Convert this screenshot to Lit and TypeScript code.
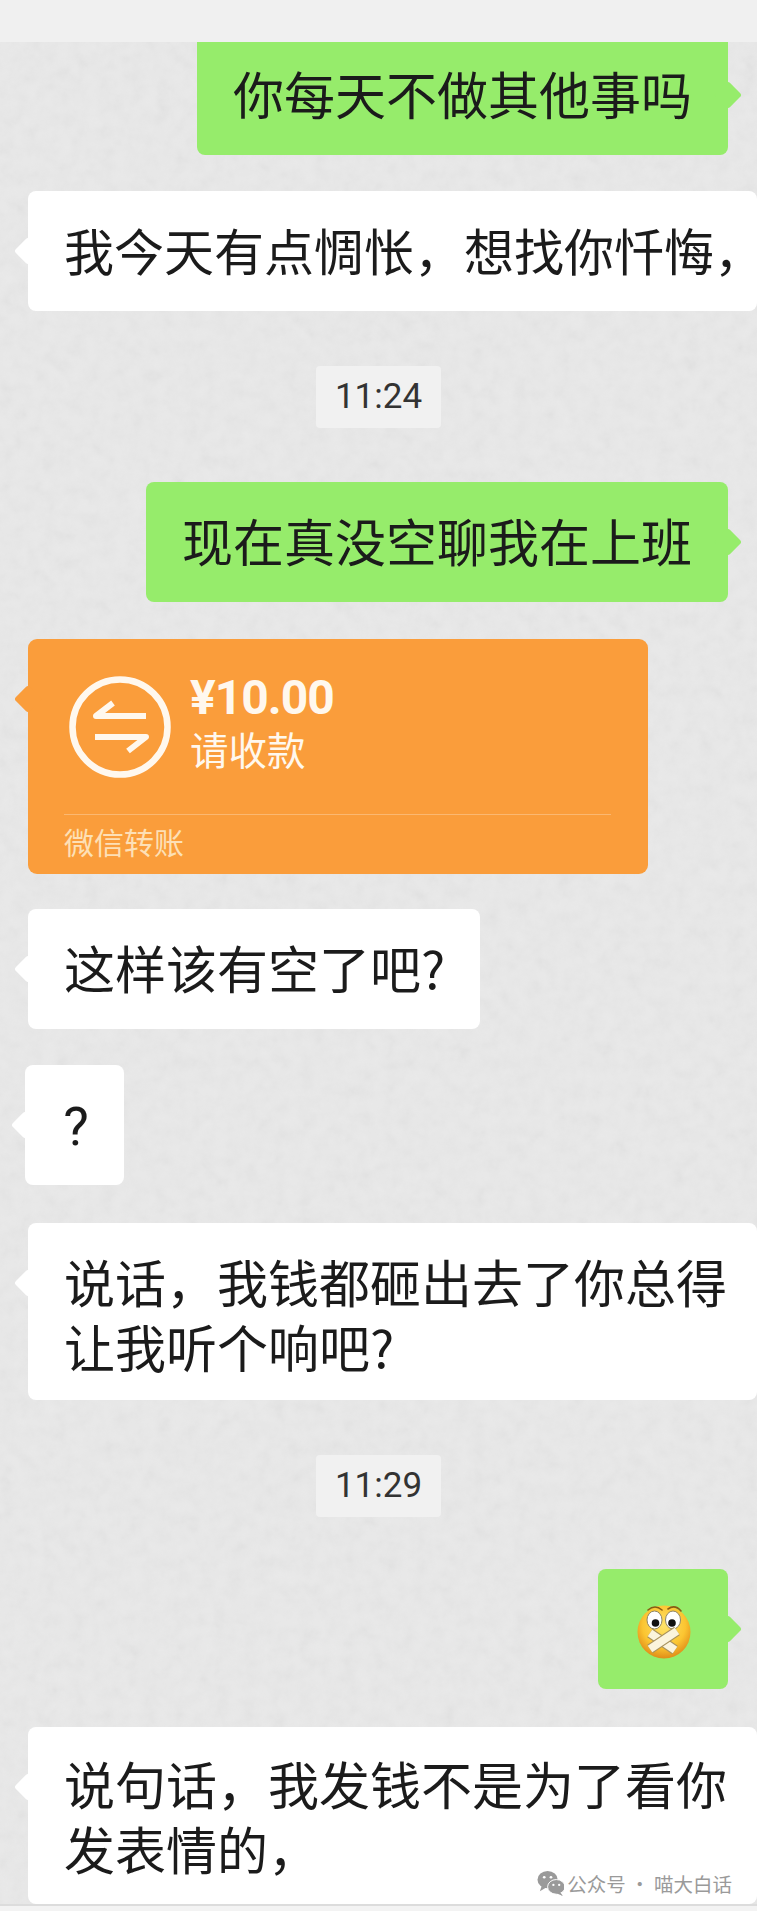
import { LitElement, html, css, svg } from "lit";
import { customElement } from "lit/decorators.js";

const LINE_REGRET = "我今天有点惆怅\uFF0C想找你忏悔\uFF0C";
const LINE_MONEY = "说话\uFF0C我钱都砸出去了你总得";
const LINE_WORD = "说句话\uFF0C我发钱不是为了看你";
const LINE_EMOJI = "发表情的\uFF0C";

const transferIcon = svg`
  <circle cx="51" cy="51" r="47.5" fill="none" stroke="#fff8ee" stroke-width="6.5"/>
  <path d="M77 40 H27 L44 27" fill="none" stroke="#fff8ee" stroke-width="6" stroke-linejoin="round"/>
  <path d="M26 61 H77 L59 75" fill="none" stroke="#fff8ee" stroke-width="6" stroke-linejoin="round"/>
`;

const emoji = svg`
  <defs>
    <radialGradient id="face" cx="50%" cy="38%" r="62%">
      <stop offset="0" stop-color="#ffe36a"/>
      <stop offset="0.65" stop-color="#fbc531"/>
      <stop offset="1" stop-color="#e08c18"/>
    </radialGradient>
  </defs>
  <circle cx="27" cy="29" r="26.5" fill="url(#face)"/>
  <path d="M11 7 Q18 1 25 7" fill="none" stroke="#8a5a12" stroke-width="1.6" stroke-linecap="round"/>
  <path d="M31 6 Q38 1 44 8" fill="none" stroke="#8a5a12" stroke-width="1.6" stroke-linecap="round"/>
  <ellipse cx="17.5" cy="17" rx="7.5" ry="9" fill="#fff" stroke="#8d8468" stroke-width="1"/>
  <ellipse cx="36" cy="17" rx="7.5" ry="9" fill="#fff" stroke="#8d8468" stroke-width="1"/>
  <circle cx="18.5" cy="20" r="3.8" fill="#111"/>
  <circle cx="35" cy="20" r="3.8" fill="#111"/>
  <path d="M13 30 L38 47" stroke="#a8925c" stroke-width="10"/>
  <path d="M13 30 L38 47" stroke="#fbf4dc" stroke-width="8"/>
  <path d="M13 46 L40 28" stroke="#a8925c" stroke-width="10"/>
  <path d="M13 46 L40 28" stroke="#fbf4dc" stroke-width="8"/>
`;

const wechatIcon = svg`
  <ellipse cx="11" cy="10" rx="10.5" ry="9" fill="#9a9a9a"/>
  <path d="M5 16 L3 22 L10 18 Z" fill="#9a9a9a"/>
  <ellipse cx="20" cy="17.5" rx="9" ry="7.6" fill="#9a9a9a" stroke="#fff" stroke-width="1"/>
  <path d="M24 23 L27 27 L20 24 Z" fill="#9a9a9a"/>
  <circle cx="7.5" cy="7.5" r="1.4" fill="#fff"/>
  <circle cx="14.5" cy="7.5" r="1.4" fill="#fff"/>
  <circle cx="17" cy="15.5" r="1.2" fill="#fff"/>
  <circle cx="23" cy="15.5" r="1.2" fill="#fff"/>
`;

@customElement("app-root")
export class AppRoot extends LitElement {
  static styles = css`
    :host {
      display: block;
      width: 757px;
      height: 1911px;
      overflow: hidden;
      background: #f3f3f3;
      font-family: "Noto Sans CJK SC", "Liberation Sans", sans-serif;
      color: #1b1b1b;
    }

    .top-bar {
      position: relative;
      z-index: 2;
      height: 42px;
      background: #f0f0f0;
    }

    .chat {
      position: relative;
      height: 1864px;
      overflow: hidden;
      background: #e9e9e9;
      display: flex;
      flex-direction: column;
      align-items: flex-start;
      border-bottom: 2px solid #dcdcdc;
      box-sizing: border-box;
    }

    .chat > * {
      flex: none;
    }

    .grain {
      position: absolute;
      inset: 0;
      width: 100%;
      height: 100%;
      opacity: 0.1;
    }

    .bubble {
      position: relative;
      box-sizing: border-box;
      padding: 26px 36px 29px;
      border-radius: 8px;
      font-size: 51px;
      line-height: 65px;
      white-space: nowrap;
    }

    .bubble::before {
      content: "";
      position: absolute;
      top: 50px;
      width: 20px;
      height: 20px;
      border-radius: 3px;
      background: inherit;
      transform: rotate(45deg);
    }

    .them {
      margin-left: 28px;
      background: #fff;
    }

    .them::before {
      left: -10px;
    }

    .me {
      align-self: flex-end;
      margin-right: 29px;
      background: #96ec6b;
    }

    .me::before {
      right: -10px;
    }

    .first {
      margin-top: -7px;
      width: 531px;
    }

    .wide {
      width: 729px;
      overflow: hidden;
    }

    .wide::before {
      display: none;
    }

    .tight {
      padding-right: 0;
      font-size: 50px;
    }

    .two {
      padding-bottom: 21px;
    }

    .tail-wrap {
      position: relative;
    }

    .tail-wrap::before {
      content: "";
      position: absolute;
      z-index: 1;
      top: 50px;
      left: 18px;
      width: 20px;
      height: 20px;
      border-radius: 3px;
      background: #fff;
      transform: rotate(45deg);
    }

    .gap-36 {
      margin-top: 36px;
    }

    .gap-37 {
      margin-top: 37px;
    }

    .gap-38 {
      margin-top: 38px;
    }

    .gap-35 {
      margin-top: 35px;
    }

    .gap-52 {
      margin-top: 52px;
    }

    .gap-54 {
      margin-top: 54px;
    }

    .gap-55 {
      margin-top: 55px;
    }

    .time {
      position: relative;
      align-self: center;
      box-sizing: border-box;
      width: 125px;
      height: 62px;
      border-radius: 4px;
      background: #f1f1f1;
      font-family: Roboto, "Liberation Sans", sans-serif;
      font-size: 35px;
      line-height: 62px;
      text-align: center;
      color: #333;
    }

    .unread {
      width: 582px;
    }

    .transfer {
      position: relative;
      box-sizing: border-box;
      width: 620px;
      height: 235px;
      margin-left: 28px;
      padding: 37px 37px 0 36px;
      border-radius: 9px;
      background: #fa9d3b;
      color: #fff8ee;
    }

    .transfer::before {
      content: "";
      position: absolute;
      top: 50px;
      left: -10px;
      width: 20px;
      height: 20px;
      border-radius: 3px;
      background: inherit;
      transform: rotate(45deg);
    }

    .transfer-main {
      display: flex;
      align-items: flex-start;
      gap: 19px;
      height: 138px;
      border-bottom: 1px solid rgba(255, 255, 255, 0.28);
    }

    .transfer-icon {
      width: 102px;
      height: 102px;
      margin-left: 5px;
      flex: none;
    }

    .amount {
      font-family: Roboto, "Liberation Sans", sans-serif;
      font-weight: 700;
      font-size: 48px;
      letter-spacing: -1px;
      line-height: 50px;
      margin-top: -3px;
    }

    .status {
      font-size: 38.5px;
      line-height: 50px;
    }

    .transfer-label {
      font-size: 30px;
      line-height: 40px;
      margin-top: 6px;
      color: #fde0b6;
    }

    .short {
      width: 452px;
    }

    .mark {
      width: 99px;
      margin-left: 25px;
      padding: 29px 0 26px 3px;
      text-align: center;
      font-family: Roboto, "Liberation Sans", sans-serif;
      font-size: 54px;
    }

    .sticker {
      width: 130px;
      height: 120px;
      padding: 34px 0 0 39px;
    }

    .sticker svg {
      display: block;
      width: 54px;
      height: 56px;
    }

    .last {
      height: 177px;
      padding-top: 24px;
    }

    .watermark {
      position: absolute;
      right: 25px;
      bottom: 7px;
      display: flex;
      align-items: center;
      gap: 3px;
      font-size: 19.5px;
      line-height: 26px;
      color: #9a9a9a;
    }

    .watermark svg {
      width: 27px;
      height: 27px;
    }
  `;

  render() {
    return html`
      <div class="top-bar"></div>
      <div class="chat">
        <svg class="grain" aria-hidden="true">
          <filter id="grain">
            <feTurbulence type="fractalNoise" baseFrequency="0.07" numOctaves="3" seed="4" />
            <feColorMatrix type="saturate" values="0" />
          </filter>
          <rect width="100%" height="100%" filter="url(#grain)" />
        </svg>

        <div class="bubble me first">你每天不做其他事吗</div>

        <div class="tail-wrap gap-36">
          <div class="bubble them wide tight">${LINE_REGRET}</div>
        </div>

        <div class="time gap-55">11:24</div>

        <div class="bubble me unread gap-54">现在真没空聊我在上班</div>

        <div class="transfer gap-37">
          <div class="transfer-main">
            <svg class="transfer-icon" viewBox="0 0 102 102">${transferIcon}</svg>
            <div>
              <div class="amount">¥10.00</div>
              <div class="status">请收款</div>
            </div>
          </div>
          <div class="transfer-label">微信转账</div>
        </div>

        <div class="bubble them short gap-35">这样该有空了吧?</div>

        <div class="bubble them mark gap-36">?</div>

        <div class="tail-wrap gap-38">
          <div class="bubble them wide two">${LINE_MONEY}<br />让我听个响吧?</div>
        </div>

        <div class="time gap-55">11:29</div>

        <div class="bubble me sticker gap-52">
          <svg viewBox="0 0 54 56">${emoji}</svg>
        </div>

        <div class="tail-wrap gap-38">
          <div class="bubble them wide two last">${LINE_WORD}<br />${LINE_EMOJI}</div>
          <div class="watermark">
            <svg viewBox="0 0 28 28">${wechatIcon}</svg>
            <span>公众号 · 喵大白话</span>
          </div>
        </div>
      </div>
    `;
  }
}
